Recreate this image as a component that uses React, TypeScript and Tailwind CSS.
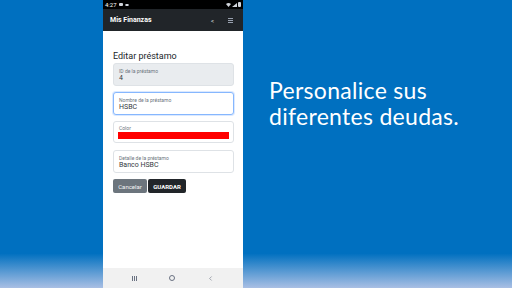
import { ChevronLeft } from 'lucide-react';

function StatusBar() {
    return (
        <div className="h-[9px] bg-black flex items-center justify-between px-[2px] text-white">
            <div className="flex items-center gap-[2px]">
                <span className="text-[6px] leading-none font-['Roboto',sans-serif]">4:27</span>
                <span className="w-[4px] h-[3px] bg-gray-300 rounded-[1px]" />
                <span className="w-[4px] h-[2px] border border-gray-300 rounded-full" />
            </div>
            <div className="flex items-center gap-[1px]">
                <svg width="5" height="4" viewBox="0 0 10 8"><path d="M0 2 Q5 -2 10 2 L5 8 Z" fill="#d1d5db" /></svg>
                <svg width="5" height="4" viewBox="0 0 10 8"><path d="M0 8 L10 0 L10 8 Z" fill="#d1d5db" /></svg>
                <span className="w-[3px] h-[5px] bg-gray-300 rounded-[1px]" />
            </div>
        </div>
    );
}

function AppBar() {
    return (
        <div className="h-[22px] bg-[#212529] flex items-center pl-[7px] pr-[10px] text-white">
            <span className="text-[7px] font-bold flex-1 font-['Roboto',sans-serif]">Mis Finanzas</span>
            <span className="text-[6px] text-gray-200 mr-[14px] font-['Roboto',sans-serif]">&lt;</span>
            <div className="flex flex-col gap-[1px]">
                <span className="w-[5px] h-[1px] bg-gray-400" />
                <span className="w-[5px] h-[1px] bg-gray-400" />
                <span className="w-[5px] h-[1px] bg-gray-400" />
            </div>
        </div>
    );
}

function Field({ label, value, className }: { label: string; value?: string; className: string }) {
    return (
        <div className={`h-[23px] rounded-[3px] border px-[5px] pt-[4px] ${className}`}>
            <div className="text-[5px] leading-[6px] text-[#6c757d]">{label}</div>
            {value && <div className="text-[7px] leading-[9px] text-[#343a40]">{value}</div>}
        </div>
    );
}

export default function App() {
    return (
        <div className="w-[512px] h-[288px] flex bg-[linear-gradient(to_bottom,#0070c0_0%,#0070c0_88%,#a9bfe4_100%)] overflow-hidden">
            <div className="w-[103px]" />
            <div className="w-[140px] h-full flex flex-col bg-white">
                <StatusBar />
                <AppBar />
                <div className="flex-1 flex flex-col px-[10px] pr-[9px] font-['Roboto',sans-serif]">
                    <h1 className="text-[9px] leading-[12px] text-[#212529] mt-[19px] mb-[1px]">Editar préstamo</h1>
                    <Field label="ID de la préstamo" value="4" className="bg-[#e9ecef] border-[#dee2e6]" />
                    <Field label="Nombre de la préstamo" value="HSBC" className="mt-[6px] bg-white border-[#86b7fe] shadow-[0_0_0_1px_rgba(13,110,253,0.15)]" />
                    <div className="mt-[6px] h-[22px] rounded-[3px] border border-[#dee2e6] px-[4px] pt-[3px]">
                        <div className="text-[5px] leading-[6px] text-[#6c757d] pl-[1px]">Color</div>
                        <div className="mt-[1px] h-[7px] bg-[#ff0000]" />
                    </div>
                    <Field label="Detalle de la préstamo" value="Banco HSBC" className="mt-[7px] bg-white border-[#dee2e6]" />
                    <div className="flex gap-[1px] mt-[6px]">
                        <button className="h-[14px] w-[34px] bg-[#6c757d] text-[6px] text-gray-100 rounded-[2px]">Cancelar</button>
                        <button className="h-[14px] w-[38px] bg-[#212529] text-[6px] font-bold text-white rounded-[2px]">GUARDAR</button>
                    </div>
                </div>
                <div className="h-[20px] bg-[#f1f1f1] flex items-center justify-center gap-[32px] text-gray-500">
                    <div className="flex gap-[1px]">
                        <span className="w-[1px] h-[5px] bg-gray-500" />
                        <span className="w-[1px] h-[5px] bg-gray-500" />
                        <span className="w-[1px] h-[5px] bg-gray-500" />
                    </div>
                    <span className="w-[6px] h-[6px] rounded-full border border-gray-500" />
                    <ChevronLeft size={7} strokeWidth={2} />
                </div>
            </div>
            <div className="flex-1 pl-[26px] pt-[77px] text-white font-['Lato',sans-serif] text-[23px] leading-[26px] tracking-[0.3px]">
                <p>Personalice sus</p>
                <p>diferentes deudas.</p>
            </div>
        </div>
    );
}
